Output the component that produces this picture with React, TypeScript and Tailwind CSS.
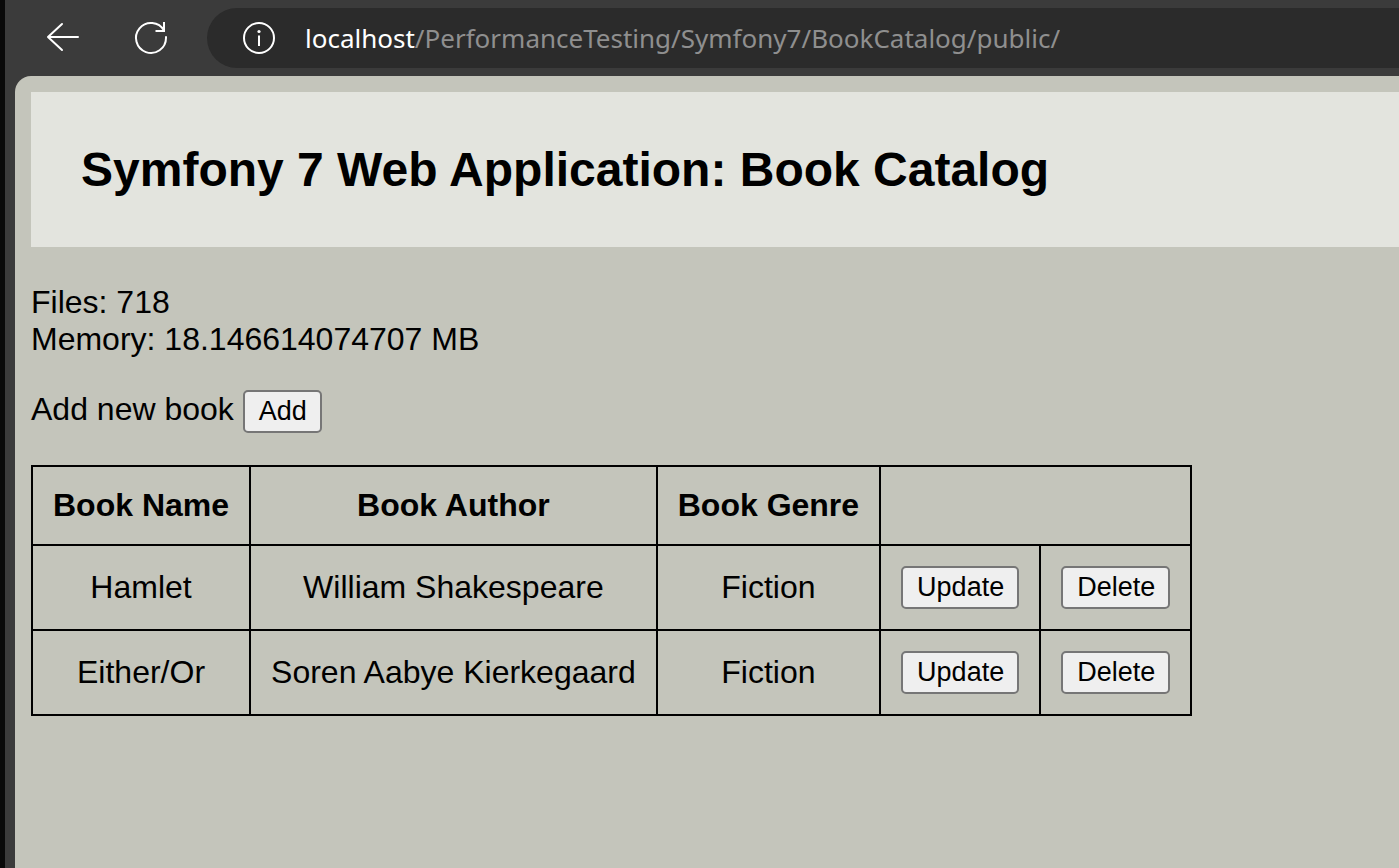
import React from "react";

type Book = { name: string; author: string; genre: string };

const books: Book[] = [
  { name: "Hamlet", author: "William Shakespeare", genre: "Fiction" },
  { name: "Either/Or", author: "Soren Aabye Kierkegaard", genre: "Fiction" },
];

const cell = "border-2 border-black p-5";

function PlainButton({ children, label }: { children: string; label?: string }) {
  return (
    <button
      type="button"
      aria-label={label}
      className="rounded-[5px] border-2 border-[#767676] bg-[#efefef] py-1 pr-[13px] pl-[14px] text-[27px] leading-[31px] text-black"
    >
      {children}
    </button>
  );
}

function BrowserBar() {
  return (
    <header className="flex h-[76px] items-center bg-[#3b3b3b] pl-10 text-white">
      <button type="button" aria-label="Back" className="flex size-11 items-center justify-center">
        <svg width="44" height="44" viewBox="0 0 44 44" fill="none" stroke="currentColor" strokeWidth="2" strokeLinecap="round" strokeLinejoin="round">
          <path d="M33 21H3M17 8L3 21l14 13" />
        </svg>
      </button>
      <button type="button" aria-label="Reload" className="ml-11 flex size-11 items-center justify-center">
        <svg width="44" height="44" viewBox="0 0 44 44" fill="none" stroke="currentColor" strokeWidth="2">
          <path d="M33 20.2V22A15 15 0 1 1 31 14.5M31 6V15H22.5" />
        </svg>
      </button>
      <div className="ml-[30px] flex h-[60px] min-w-0 flex-1 items-center rounded-l-full bg-[#2b2b2b] pl-[30px]">
        <button type="button" aria-label="View site information" className="flex size-11 shrink-0 items-center justify-center">
          <svg width="44" height="44" viewBox="0 0 44 44" fill="none" stroke="currentColor" strokeWidth="2">
            <circle cx="22" cy="22" r="15" />
            <path d="M22 19.5V30" />
            <circle cx="22" cy="15.5" r="1.6" fill="currentColor" stroke="none" />
          </svg>
        </button>
        <div
          role="textbox"
          aria-label="Address"
          tabIndex={0}
          className="ml-6 truncate font-['Noto_Sans','Open_Sans',sans-serif] text-[26px] leading-9 text-[#8f8f8f]"
        >
          <span className="text-white">localhost</span>/PerformanceTesting/Symfony7/BookCatalog/public/
        </div>
      </div>
    </header>
  );
}

export default function App() {
  return (
    <div className="flex min-h-screen flex-col border-l-5 border-[#090909] bg-[#3b3b3b] font-['Liberation_Sans',Arial,sans-serif] text-[32px] leading-[37px] text-black">
      <BrowserBar />
      <main className="ml-[10px] flex-1 rounded-tl-2xl bg-[#c4c5bb] pt-4 pl-4">
        <div className="bg-[#e3e4de] p-[50px]">
          <h1 className="text-5xl leading-[55px] font-bold">Symfony 7 Web Application: Book Catalog</h1>
        </div>
        <p className="mt-[37px]">
          Files: 718
          <br />
          Memory: 18.146614074707 MB
        </p>
        <div className="mt-8 flex items-baseline gap-[9px]">
          <span>Add new book</span>
          <PlainButton label="Add new book">Add</PlainButton>
        </div>
        <table className="mt-8 border-collapse text-center">
          <thead>
            <tr>
              <th className={cell}>Book Name</th>
              <th className={cell}>Book Author</th>
              <th className={cell}>Book Genre</th>
              <td className={cell} colSpan={2}></td>
            </tr>
          </thead>
          <tbody>
            {books.map((book) => (
              <tr key={book.name}>
                <td className={cell}>{book.name}</td>
                <td className={cell}>{book.author}</td>
                <td className={cell}>{book.genre}</td>
                <td className={cell}>
                  <div className="flex">
                    <PlainButton>Update</PlainButton>
                  </div>
                </td>
                <td className={cell}>
                  <div className="flex">
                    <PlainButton>Delete</PlainButton>
                  </div>
                </td>
              </tr>
            ))}
          </tbody>
        </table>
      </main>
    </div>
  );
}
